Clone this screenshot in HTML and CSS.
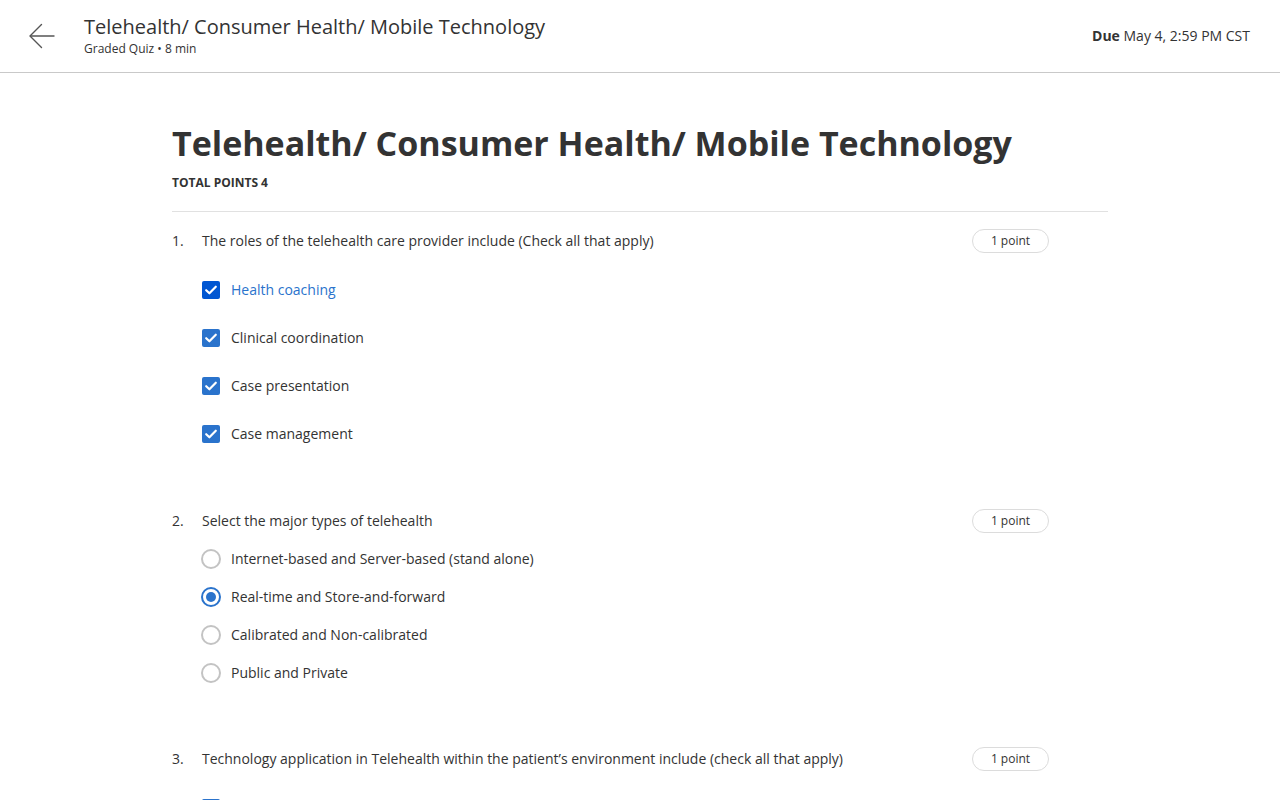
FILE: index.html
```html
<!DOCTYPE html>
<html lang="en">
<head>
<meta charset="utf-8">
<title>Telehealth/ Consumer Health/ Mobile Technology</title>
<link rel="stylesheet" href="styles.css">
</head>
<body>
<header class="topbar">
  <div class="topbar-left">
    <button class="back" aria-label="Back">
      <svg width="26" height="26" viewBox="0 0 26 26" fill="none" stroke="#555" stroke-width="1.4" stroke-linecap="round" stroke-linejoin="round">
        <path d="M25 13H1.5"/>
        <path d="M12.5 1.5L1 13l11.5 11.5"/>
      </svg>
    </button>
    <div class="topbar-titles">
      <div class="topbar-title">Telehealth/ Consumer Health/ Mobile Technology</div>
      <div class="topbar-sub">Graded Quiz • 8 min</div>
    </div>
  </div>
  <div class="due"><b>Due</b> May 4, 2:59 PM CST</div>
</header>

<main class="content">
  <h1 class="quiz-title">Telehealth/ Consumer Health/ Mobile Technology</h1>
  <div class="total">TOTAL POINTS 4</div>
  <hr class="divider">

  <section class="question">
    <div class="q-row">
      <span class="q-num">1.</span>
      <span class="q-text">The roles of the telehealth care provider include (Check all that apply)</span>
      <span class="badge">1 point</span>
    </div>
    <ul class="options checks">
      <li class="opt"><span class="cb cb-focus"><svg viewBox="0 0 18 18" width="18" height="18"><path d="M4.2 9.2l3.2 3.1 6.4-6.6" fill="none" stroke="#fff" stroke-width="2.2" stroke-linecap="round" stroke-linejoin="round"/></svg></span><span class="label label-active">Health coaching</span></li>
      <li class="opt"><span class="cb"><svg viewBox="0 0 18 18" width="18" height="18"><path d="M4.2 9.2l3.2 3.1 6.4-6.6" fill="none" stroke="#fff" stroke-width="2.2" stroke-linecap="round" stroke-linejoin="round"/></svg></span><span class="label">Clinical coordination</span></li>
      <li class="opt"><span class="cb"><svg viewBox="0 0 18 18" width="18" height="18"><path d="M4.2 9.2l3.2 3.1 6.4-6.6" fill="none" stroke="#fff" stroke-width="2.2" stroke-linecap="round" stroke-linejoin="round"/></svg></span><span class="label">Case presentation</span></li>
      <li class="opt"><span class="cb"><svg viewBox="0 0 18 18" width="18" height="18"><path d="M4.2 9.2l3.2 3.1 6.4-6.6" fill="none" stroke="#fff" stroke-width="2.2" stroke-linecap="round" stroke-linejoin="round"/></svg></span><span class="label">Case management</span></li>
    </ul>
  </section>

  <section class="question">
    <div class="q-row">
      <span class="q-num">2.</span>
      <span class="q-text">Select the major types of telehealth</span>
      <span class="badge">1 point</span>
    </div>
    <ul class="options radios">
      <li class="opt"><span class="radio"></span><span class="label">Internet-based and Server-based (stand alone)</span></li>
      <li class="opt"><span class="radio radio-on"></span><span class="label">Real-time and Store-and-forward</span></li>
      <li class="opt"><span class="radio"></span><span class="label">Calibrated and Non-calibrated</span></li>
      <li class="opt"><span class="radio"></span><span class="label">Public and Private</span></li>
    </ul>
  </section>

  <section class="question">
    <div class="q-row">
      <span class="q-num">3.</span>
      <span class="q-text">Technology application in Telehealth within the patient’s environment include (check all that apply)</span>
      <span class="badge">1 point</span>
    </div>
    <ul class="options checks">
      <li class="opt"><span class="cb cb-empty"></span></li>
    </ul>
  </section>
</main>
</body>
</html>
```

FILE: styles.css
```css
* { box-sizing: border-box; }

html, body {
  margin: 0;
  padding: 0;
  background: #fff;
  color: #333;
  font-family: "Open Sans", "Noto Sans", Arial, sans-serif;
}

body { overflow: hidden; height: 800px; }

.topbar {
  height: 73px;
  border-bottom: 1px solid #c9c9c9;
  display: flex;
  align-items: flex-start;
  justify-content: space-between;
  padding: 0 30px 0 28px;
}

.topbar-left {
  display: flex;
  align-items: flex-start;
}

.back {
  border: 0;
  background: none;
  padding: 0;
  margin-top: 23px;
  width: 28px;
  height: 26px;
  margin-right: 28px;
  cursor: pointer;
}

.topbar-titles {
  padding-top: 13px;
}

.topbar-title {
  font-size: 20px;
  line-height: 28px;
  color: #333;
}

.topbar-sub {
  font-size: 12px;
  line-height: 16px;
  color: #333;
}

.due {
  font-size: 14px;
  line-height: 20px;
  margin-top: 26px;
  color: #333;
}
.due b { font-weight: 700; }

.content {
  width: 936px;
  margin: 0 auto;
  padding-top: 48px;
}

.quiz-title {
  margin: 0;
  font-size: 34px;
  line-height: 44px;
  font-weight: 700;
  color: #333;
}

.total {
  margin-top: 9px;
  font-size: 12px;
  line-height: 18px;
  font-weight: 700;
  color: #333;
}

.divider {
  margin: 19px 0 0;
  border: 0;
  border-top: 1px solid #e1e1e1;
}

.question {
  padding-top: 17px;
  padding-bottom: 34px;
}

.q-row {
  display: flex;
  align-items: center;
  min-height: 24px;
  padding-right: 59px;
  font-size: 14px;
  line-height: 24px;
}

.q-num {
  width: 30px;
  flex: none;
}

.q-text { flex: 1; }

.badge {
  flex: none;
  width: 77px;
  height: 24px;
  border: 1px solid #dcdcdc;
  border-radius: 12px;
  font-size: 12px;
  line-height: 22px;
  text-align: center;
  color: #333;
}

.options {
  list-style: none;
  margin: 0;
  padding: 0 0 0 30px;
}

.checks { margin-top: 13px; }
.radios { margin-top: 7px; padding-bottom: 4px; }

.opt {
  display: flex;
  align-items: center;
  font-size: 14px;
}

.checks .opt { height: 48px; }
.radios .opt { height: 38px; }

.cb {
  width: 18px;
  height: 18px;
  border-radius: 2px;
  background: #2a73cc;
  display: flex;
  flex: none;
  margin-right: 11px;
}
.cb-focus { background: #0056d2; }
.cb-empty { background: #fff; border: 2px solid #2a73cc; }

.radio {
  width: 20px;
  height: 20px;
  border-radius: 50%;
  border: 2px solid #c3c3c3;
  flex: none;
  margin-left: -1px;
  margin-right: 10px;
  position: relative;
}
.radio-on { border-color: #2a73cc; }
.radio-on::after {
  content: "";
  position: absolute;
  left: 3px;
  top: 3px;
  width: 10px;
  height: 10px;
  border-radius: 50%;
  background: #2a73cc;
}

.label { color: #333; line-height: 20px; }
.label-active { color: #2a73cc; }
```
